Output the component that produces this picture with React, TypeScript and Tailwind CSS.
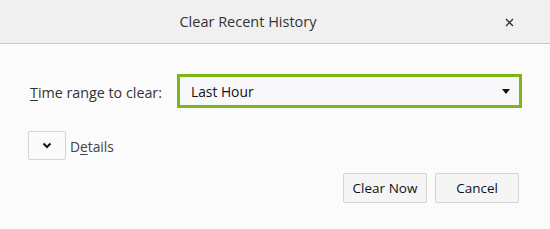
import React from "react";

export default function App() {
  return (
    <div className="w-[550px] h-[229px] bg-[#fbfbfb] text-[#222] overflow-hidden" style={{ fontFamily: '"Open Sans", "Noto Sans", sans-serif' }}>
      <div className="h-[44px] bg-[#f0f0f0] border-b border-[#c8c8c8] flex items-center relative">
        <div className="flex-1 flex justify-center pr-[54px] text-[14.5px] font-medium text-[#333] pt-[1px]">Clear Recent History</div>
        <svg className="absolute left-[505px] top-[18px]" width="9" height="9" viewBox="0 0 9 9">
          <path d="M1 1 L8 8 M8 1 L1 8" stroke="#333" strokeWidth="1.4" />
        </svg>
      </div>
      <div className="flex items-center pl-[30px] mt-[30px] h-[34px]">
        <div className="w-[147px] text-[14.3px] text-[#333] whitespace-nowrap pt-[3px]"><span className="underline underline-offset-2">T</span>ime range to clear:</div>
        <div className="w-[345px] h-[34px] border-[3px] border-[#7cb618] bg-[#f8f8fa] flex items-center justify-between pl-[11px] pr-[9px]">
          <span className="text-[13.8px] text-[#111] pt-[2px]">Last Hour</span>
          <svg width="8" height="5" viewBox="0 0 8 5"><path d="M0 0 L8 0 L4 5 Z" fill="#111" /></svg>
        </div>
      </div>
      <div className="flex items-center pl-[28px] mt-[23px]">
        <div className="w-[38px] h-[29px] border border-[#d4d4d4] bg-[#fafafa] rounded-[2px] flex items-center justify-center">
          <svg width="10" height="7" viewBox="0 0 10 7"><path d="M1.5 1.5 L5 5 L8.5 1.5" stroke="#111" strokeWidth="2" fill="none" /></svg>
        </div>
        <div className="ml-[4px] text-[13.8px] text-[#444] pt-[3px]">D<span className="underline underline-offset-2">e</span>tails</div>
      </div>
      <div className="flex justify-end gap-[8px] pr-[31px] mt-[13px]">
        <button className="w-[84px] h-[30px] border border-[#d4d4d4] bg-[#f5f5f5] rounded-[2px] text-[13.5px] text-[#111]">Clear Now</button>
        <button className="w-[84px] h-[30px] border border-[#d4d4d4] bg-[#f5f5f5] rounded-[2px] text-[13.5px] text-[#111]">Cancel</button>
      </div>
    </div>
  );
}
